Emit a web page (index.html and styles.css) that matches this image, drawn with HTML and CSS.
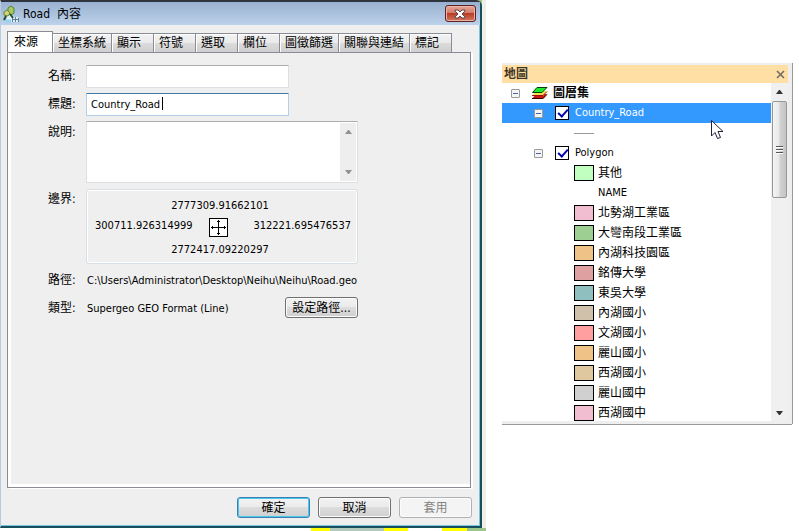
FILE: index.html
```
<!DOCTYPE html>
<html lang="zh-Hant">
<head>
<meta charset="UTF-8" />
<meta name="viewport" content="width=device-width, initial-scale=1" />
<title>Road 內容</title>
<link rel="stylesheet" href="styles.css">
</head>
<body>
	<div class="backdrop">
		<form class="dialog" onsubmit="return false">
			<div class="titlebar">
				<svg class="app-icon" width="18" height="18" viewBox="0 0 18 18">
					<path d="M5 10L9 9L12 12L16 12V17H4Z" fill="#e2f1f6"/>
					<path d="M6 3L9 1L12 3V8L9 10L6 8Z" fill="#a9c862" stroke="#4d8434"/>
					<path d="M2 7L5 5L8 8L6 11L2 10Z" fill="#d6d27a" stroke="#5d8c33"/>
					<path d="M8 9L11 13M4 11L2 15" stroke="#234f33" stroke-width="2" fill="none"/>
					<path d="M4 16H9" stroke="#8ed5f5" stroke-width="3"/>
					<path d="M10.5 13V17M13.500 12V17M16.500 13V17M10 14.500H17" stroke="#5a7e99"/>
				</svg>
				<h1 class="title">Road&nbsp; 內容</h1>
				<button type="button" class="close" aria-label="關閉">
					<svg width="12" height="10" viewBox="0 0 12 10">
						<path d="M1 1H4L6 3L8 1H11V2L8 5L11 8V9H8L6 7L4 9H1V8L4 5L1 2Z" fill="#fff" stroke="#59464f"/>
					</svg>
				</button>
			</div>
			<div class="tabs" role="tablist">
				<button type="button" class="tab active" role="tab" aria-selected="true">來源</button>
				<button type="button" class="tab wide" role="tab">坐標系統</button>
				<button type="button" class="tab" role="tab">顯示</button>
				<button type="button" class="tab" role="tab">符號</button>
				<button type="button" class="tab" role="tab">選取</button>
				<button type="button" class="tab" role="tab">欄位</button>
				<button type="button" class="tab wide" role="tab">圖徵篩選</button>
				<button type="button" class="tab wide" role="tab">關聯與連結</button>
				<button type="button" class="tab" role="tab">標記</button>
			</div>
			<div class="page" role="tabpanel">
				<div class="fields">
					<label for="name">名稱:</label>
					<input id="name" class="text short" type="text">
					<label for="caption">標題:</label>
					<div class="edit short">
						<input id="caption" class="text focus" type="text" value="Country_Road">
						<i class="caret"></i>
					</div>
					<label for="desc">說明:</label>
					<div class="memo">
						<textarea id="desc"></textarea>
						<div class="memo-bar">
							<svg width="7" height="4" viewBox="0 0 7 4"><path d="M0 4L3 0H4L7 4Z" fill="#929292"/></svg>
							<svg width="7" height="4" viewBox="0 0 7 4"><path d="M0 0H7L4 4H3Z" fill="#929292"/></svg>
						</div>
					</div>
					<span class="label">邊界:</span>
					<div class="extent">
						<span class="north">2777309.91662101</span>
						<span class="west">300711.926314999</span>
						<svg class="cross" width="19" height="19" viewBox="0 0 19 19" shape-rendering="crispEdges">
							<path d="M.5 .5H18.5V18.5H.5Z" fill="#fff" stroke="#000"/>
							<path d="M2 9.5H17M9.5 2V17M3.5 8V11M15.5 8V11M8 3.5H11M8 15.5H11" stroke="#000"/>
						</svg>
						<span class="east">312221.695476537</span>
						<span class="south">2772417.09220297</span>
					</div>
					<span class="label">路徑:</span>
					<span class="value">C:\Users\Administrator\Desktop\Neihu\Neihu\Road.geo</span>
					<span class="label">類型:</span>
					<div class="type">
						<span class="value">Supergeo GEO Format (Line)</span>
						<button type="button" class="btn">設定路徑...</button>
					</div>
				</div>
			</div>
			<div class="actions">
				<button type="submit" class="btn default">確定</button>
				<button type="button" class="btn">取消</button>
				<button type="button" class="btn" disabled>套用</button>
			</div>
		</form>
	</div>

	<section class="layers">
		<div class="layers-head">
			<h2>地圖</h2>
			<button type="button" class="hide" aria-label="關閉">
				<svg width="9" height="9" viewBox="0 0 9 9"><path d="M1 1L8 8M8 1L1 8" stroke="#6d6a64" stroke-width="1.5"/></svg>
			</button>
		</div>
		<div class="layers-body">
			<ul class="tree">
				<li class="root">
					<button type="button" class="toggle" aria-label="收合"></button>
					<svg width="17" height="14" viewBox="0 0 17 14">
						<path d="M1 13L5 8H16L12 13Z" fill="#c81414"/>
						<path d="M1 12.500H12L16 8.500" fill="none" stroke="#300"/>
						<path d="M1 10L5 5H16L12 10Z" fill="#f6e04c"/>
						<path d="M1 9.500H12L16 5.500" fill="none" stroke="#a01010"/>
						<path d="M1.500 6.500L6 1.500H16L11 6.500Z" fill="#19ec28" stroke="#063c08"/>
					</svg>
					<b>圖層集</b>
				</li>
				<li class="layer selected">
					<button type="button" class="toggle" aria-label="收合"></button>
					<input type="checkbox" id="road" checked>
					<label for="road">Country_Road</label>
				</li>
				<li class="item"><i class="line"></i></li>
				<li class="layer">
					<button type="button" class="toggle" aria-label="收合"></button>
					<input type="checkbox" id="polygon" checked>
					<label for="polygon">Polygon</label>
				</li>
				<li class="item"><i class="swatch mint"></i>其他</li>
				<li class="item field">NAME</li>
				<li class="item"><i class="swatch pink"></i>北勢湖工業區</li>
				<li class="item"><i class="swatch green"></i>大彎南段工業區</li>
				<li class="item"><i class="swatch orange"></i>內湖科技園區</li>
				<li class="item"><i class="swatch rose"></i>銘傳大學</li>
				<li class="item"><i class="swatch teal"></i>東吳大學</li>
				<li class="item"><i class="swatch taupe"></i>內湖國小</li>
				<li class="item"><i class="swatch coral"></i>文湖國小</li>
				<li class="item"><i class="swatch orange"></i>麗山國小</li>
				<li class="item"><i class="swatch sand"></i>西湖國小</li>
				<li class="item"><i class="swatch gray"></i>麗山國中</li>
				<li class="item"><i class="swatch pink"></i>西湖國中</li>
			</ul>
			<div class="scroll">
				<svg width="7" height="4" viewBox="0 0 7 4"><path d="M0 4L3 0H4L7 4Z" fill="#333"/></svg>
				<div class="thumb"><i></i><i></i><i></i></div>
				<svg class="down" width="7" height="4" viewBox="0 0 7 4"><path d="M0 0H7L4 4H3Z" fill="#333"/></svg>
			</div>
		</div>
		<svg class="cursor" width="13" height="20" viewBox="0 0 13 20">
			<path d="M.5 .5V16L4 12.500L6.500 18.500L9.500 17.500L7 11.500H12Z" fill="#fff" stroke="#20203a"/>
		</svg>
	</section>
</body>
</html>
```
FILE: styles.css
```
* {
	box-sizing: border-box;
}
body {
	display: flex;
	gap: 16px;
	align-items: flex-start;
	min-height: 100vh;
	margin: 0;
	padding-right: 7px;
	background-color: #fff;
	color: #000;
	font: 11px/16px "DejaVu Sans Condensed", "Noto Sans CJK TC", sans-serif;
}
button, input, textarea {
	margin: 0;
	font: inherit;
	color: inherit;
}
h1, h2 {
	margin: 0;
	font-size: 12px;
}
i {
	font-style: normal;
}

/* 屬性視窗 */
.backdrop {
	display: flex;
	flex: 487 1 0;
	min-height: 100vh;
	padding: 0 4px 3px 0;
	background:
		linear-gradient(#eef0e8, #eef0e8) right top / 4px calc(100% - 3px) no-repeat,
		linear-gradient(90deg, #fff 64%, #ff0 64%, #ff0 68%, #b3c9bd 68%, #b3c9bd 79%, #ff0 79%, #ff0 84%, #fff 84%, #fff 91%, #ff0 91%, #ff0 96%, #9cc68c 96%);
}
.dialog {
	display: flex;
	flex: 1;
	flex-direction: column;
	min-width: 0;
	border: 1px solid #b9cbe0;
	border-top: 2px solid #30343c;
	border-right: 2px solid #164f5d;
	border-bottom: 2px solid #164f5d;
	border-radius: 0 6px 0 0;
	background-color: #efefef;
	box-shadow: inset -1px -1px #7cc4dc;
}
.titlebar {
	display: flex;
	align-items: center;
	height: 23px;
	padding: 0 4px 0 1px;
	background: linear-gradient(#99b1d0, #bcd2eb);
}
.title {
	flex: 1;
	padding-left: 3px;
	font-weight: normal;
}
.close {
	display: flex;
	align-items: center;
	justify-content: center;
	width: 31px;
	height: 17px;
	padding: 0;
	border: 1px solid #5c2025;
	border-radius: 3px;
	background: linear-gradient(#e5a595, #d37a68 48%, #b83d28 50%, #d4775c);
	box-shadow: inset 0 0 0 1px #e8b5a8;
}
.tabs {
	display: flex;
	align-items: flex-end;
	height: 27px;
	padding: 0 6px;
}
.tab {
	width: 42px;
	height: 19px;
	padding: 0 5px;
	border: 1px solid #898c95;
	border-bottom: 0;
	border-left-width: 0;
	background: linear-gradient(#f2f2f2, #ebebeb 48%, #dcdcdc 50%, #cfcfcf);
	box-shadow: inset 1px 1px #fff;
	font-size: 12px;
	line-height: 18px;
	text-align: left;
	white-space: nowrap;
}
.tab.wide {
	width: auto;
}
.tab.active {
	width: 46px;
	height: 21px;
	padding: 0 6px;
	border-left-width: 1px;
	background: #fff;
}
.page {
	flex: 1;
	margin: 0 9px 0 6px;
	padding: 12px 37px;
	border: 1px solid #898c95;
	background-color: #efefef;
	box-shadow: inset 3px 0 #fff, inset 0 -3px #fff, 2px 1px #fff;
}
.fields {
	display: grid;
	grid-template-columns: 33px minmax(0, 272px);
	grid-template-rows: 23px 23px 62px 76px 23px 22px;
	gap: 5px;
	padding-left: 3px;
}
.fields label, .label {
	padding-top: 3px;
	font-size: 12px;
	line-height: 16px;
	white-space: nowrap;
}
.text {
	width: 100%;
	height: 23px;
	padding: 0 4px;
	border: 1px solid #dcdfe3;
	border-top-color: #abadb3;
	border-radius: 1px;
	background-color: #fff;
	outline: 0;
}
.text.focus {
	border-color: #b5cfe7;
	border-top-color: #3d7bad;
}
.short {
	max-width: 203px;
}
.edit {
	position: relative;
}
.caret {
	position: absolute;
	top: 4px;
	left: 76px;
	width: 1px;
	height: 13px;
	background-color: #000;
}
.memo {
	display: flex;
	padding: 1px;
	border: 1px solid #dcdfe3;
	border-top-color: #abadb3;
	background-color: #fff;
}
.memo textarea {
	flex: 1;
	min-width: 0;
	padding: 2px 4px;
	border: 0;
	outline: 0;
	resize: none;
	background: none;
}
.memo-bar {
	display: flex;
	flex-direction: column;
	align-items: center;
	justify-content: space-between;
	width: 16px;
	padding: 7px 0;
	background-color: #eee;
}
.extent {
	display: grid;
	grid-template-columns: minmax(0, 114px) 19px 1fr;
	grid-template-rows: 16px 20px 16px;
	gap: 4px 0;
	padding: 8px 6px 0 8px;
	margin-top: 1px;
	border: 1px solid #d5dfe5;
	border-radius: 3px;
	box-shadow: inset 0 0 0 1px #fff;
}
.north, .south {
	grid-column: 1 / 4;
	padding-right: 6px;
	text-align: center;
}
.east {
	text-align: right;
}
.value {
	padding: 4px 0 0 1px;
	white-space: nowrap;
}
.type {
	display: flex;
	justify-content: space-between;
}
.btn {
	width: 73px;
	height: 21px;
	padding: 0;
	border: 1px solid #707070;
	border-radius: 3px;
	background: linear-gradient(#f2f2f2, #ebebeb 48%, #dddddd 50%, #cfcfcf);
	box-shadow: inset 0 0 0 1px #fcfcfc;
	font-size: 12px;
	line-height: 18px;
	white-space: nowrap;
}
.btn.default {
	border-color: #3c7fb1;
	box-shadow: inset 0 0 0 1px #48c8ee;
}
.btn:disabled {
	border-color: #adb2b5;
	background: #f4f4f4;
	color: #838383;
}
.actions {
	display: flex;
	justify-content: flex-end;
	gap: 8px;
	padding: 9px 8px 8px 0;
}

/* 圖層清單 */
.layers {
	position: relative;
	flex: 289 1 0;
	min-width: 0;
	margin-top: 63px;
	border: solid #eee;
	border-width: 2px 4px 3px 0;
	box-shadow: 0 1px #999, 1px 0 #999;
}
.layers-head {
	display: flex;
	align-items: center;
	justify-content: space-between;
	height: 18px;
	padding: 0 3px 0 2px;
	background-color: #ffdfa3;
}
.layers-head h2 {
	color: #3c3425;
}
.hide {
	display: flex;
	padding: 0;
	border: 0;
	background: none;
}
.layers-body {
	display: flex;
	height: 338px;
}
.tree {
	flex: 1;
	min-width: 0;
	margin: 0;
	padding: 0;
	overflow: hidden;
	background-color: #fff;
	list-style: none;
	font-size: 12px;
}
.tree li {
	display: flex;
	align-items: center;
	height: 20px;
	white-space: nowrap;
}
.root {
	padding-left: 9px;
}
.root svg {
	margin: 0 5px 0 11px;
}
.layer {
	gap: 12px;
	padding-left: 32px;
	font-size: 11px;
}
.layer label {
	margin-left: -6px;
}
.selected {
	background-color: #3399ff;
	color: #fff;
}
.item {
	gap: 4px;
	padding-left: 72px;
}
.item.field {
	padding-left: 96px;
	font-size: 11px;
}
.toggle {
	width: 9px;
	height: 9px;
	padding: 0;
	border: 1px solid #9a9a9a;
	border-radius: 1px;
	background: linear-gradient(#4b63a7, #4b63a7) center / 5px 1px no-repeat #f4f4f4;
}
.tree input {
	appearance: none;
	width: 14px;
	height: 14px;
	border: 1px solid #000;
	background: #fff;
}
.tree input:checked::before {
	content: "";
	display: block;
	width: 4px;
	height: 8px;
	margin: 0 0 0 4px;
	border: solid #0000b4;
	border-width: 0 2px 2px 0;
	transform: rotate(42deg);
}
.line {
	width: 20px;
	height: 1px;
	background-color: #999;
}
.swatch {
	width: 20px;
	height: 16px;
	border: 1px solid #000;
}
.mint { background-color: #c1ffc1; }
.pink { background-color: #f1bed1; }
.green { background-color: #9ecf92; }
.orange { background-color: #efc388; }
.rose { background-color: #dea0a0; }
.teal { background-color: #8fbfbf; }
.taupe { background-color: #d0c1aa; }
.coral { background-color: #ff9f9f; }
.sand { background-color: #dfc79f; }
.gray { background-color: #d0d0d0; }
.scroll {
	display: flex;
	flex-direction: column;
	align-items: center;
	width: 17px;
	padding: 7px 1px 6px;
	background-color: #f0f0f0;
}
.thumb {
	display: flex;
	flex-direction: column;
	align-items: center;
	justify-content: center;
	gap: 1px;
	width: 15px;
	height: 97px;
	margin-top: 7px;
	border: 1px solid #979797;
	border-radius: 2px;
	background: linear-gradient(90deg, #f5f5f5, #e6e6e6 48%, #d2d2d2 52%, #c4c4c4);
}
.thumb i {
	width: 7px;
	height: 2px;
	border-top: 1px solid #555;
	background-color: #fff;
}
.down {
	margin-top: auto;
}
.cursor {
	position: absolute;
	top: 55px;
	right: 64px;
}
```
